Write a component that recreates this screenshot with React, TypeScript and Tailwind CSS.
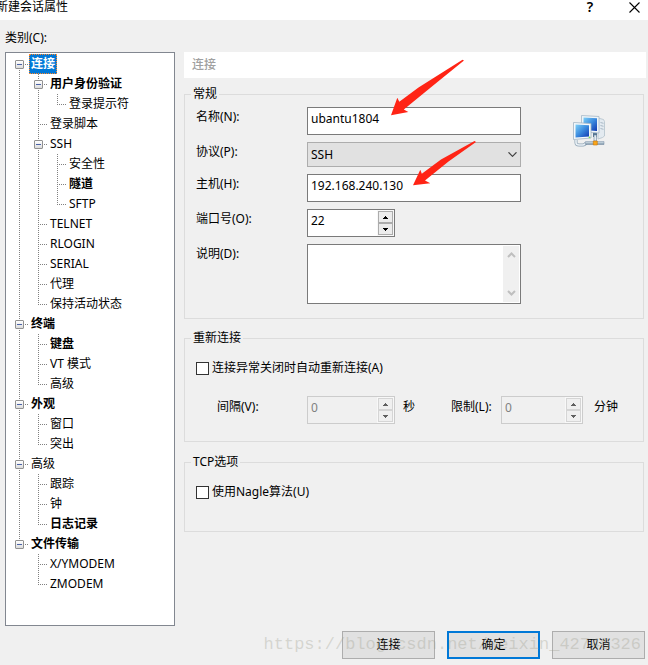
import React, { useState } from 'react';
import type { ReactNode } from 'react';

interface TreeNode {
  label: string;
  bold?: boolean;
  children?: TreeNode[];
}

const categories: TreeNode[] = [
  {
    label: '连接',
    bold: true,
    children: [
      { label: '用户身份验证', bold: true, children: [{ label: '登录提示符' }] },
      { label: '登录脚本' },
      { label: 'SSH', children: [{ label: '安全性' }, { label: '隧道', bold: true }, { label: 'SFTP' }] },
      { label: 'TELNET' },
      { label: 'RLOGIN' },
      { label: 'SERIAL' },
      { label: '代理' },
      { label: '保持活动状态' },
    ],
  },
  { label: '终端', bold: true, children: [{ label: '键盘', bold: true }, { label: 'VT 模式' }, { label: '高级' }] },
  { label: '外观', bold: true, children: [{ label: '窗口' }, { label: '突出' }] },
  { label: '高级', children: [{ label: '跟踪' }, { label: '钟' }, { label: '日志记录', bold: true }] },
  { label: '文件传输', bold: true, children: [{ label: 'X/YMODEM' }, { label: 'ZMODEM' }] },
];

// One 19px wide column of dotted connector lines
const Guide = ({ up, down, right }: { up?: boolean; down?: boolean; right?: boolean }) => (
  <svg className="h-5 w-[19px] shrink-0" viewBox="0 0 19 20" fill="none" stroke="#808080" strokeDasharray="1 1" aria-hidden="true">
    {up && <path d="M9.5 0V11" />}
    {down && <path d="M9.5 10V20" />}
    {right && <path d="M9 10.5H18" />}
  </svg>
);

interface TreeItemProps {
  node: TreeNode;
  path: string;
  guides: boolean[];
  isFirst: boolean;
  isLast: boolean;
  selected: string;
  onSelect: (path: string) => void;
}

const TreeItem = ({ node, path, guides, isFirst, isLast, selected, onSelect }: TreeItemProps) => {
  const [open, setOpen] = useState(true);
  const isSelected = selected === path;
  const isRoot = guides.length === 0;

  return (
    <li role="treeitem" aria-selected={isSelected}>
      <div className="flex h-5">
        {guides.map((line, i) => (
          <Guide key={i} up={line} down={line} />
        ))}
        <div className="relative flex">
          <Guide up={!(isRoot && isFirst)} down={!isLast} right />
          {node.children && (
            <button
              type="button"
              aria-label={open ? 'Collapse' : 'Expand'}
              onClick={() => setOpen(!open)}
              className="absolute top-1.5 left-[5px] flex size-[9px] items-center justify-center rounded-[1px] border border-[#919191] bg-linear-to-b from-white to-[#dcdcdc]"
            >
              <span className="h-px w-[5px] bg-[#4b63a7]" />
            </button>
          )}
        </div>
        <button
          type="button"
          onClick={() => onSelect(path)}
          className={`border px-px leading-[18px] whitespace-nowrap ${node.bold ? 'font-bold' : ''} ${
            isSelected ? 'border-dotted border-[#ff8728] bg-[#0078d7] text-white' : 'border-transparent'
          }`}
        >
          {node.label}
        </button>
      </div>
      {node.children && open && (
        <TreeList
          nodes={node.children}
          path={path}
          guides={[...guides, !isLast]}
          selected={selected}
          onSelect={onSelect}
        />
      )}
    </li>
  );
};

interface TreeListProps {
  nodes: TreeNode[];
  path: string;
  guides: boolean[];
  selected: string;
  onSelect: (path: string) => void;
}

const TreeList = ({ nodes, path, guides, selected, onSelect }: TreeListProps) => (
  <ul role={path ? 'group' : 'tree'} aria-labelledby={path ? undefined : 'category-label'}>
    {nodes.map((node, i) => (
      <TreeItem
        key={node.label}
        node={node}
        path={`${path}/${node.label}`}
        guides={guides}
        isFirst={i === 0}
        isLast={i === nodes.length - 1}
        selected={selected}
        onSelect={onSelect}
      />
    ))}
  </ul>
);

const Group = ({ title, className, children }: { title: string; className: string; children: ReactNode }) => (
  <fieldset className={`mr-0.5 min-w-0 border border-[#dcdcdc] pl-[11px] ${className}`}>
    <legend className="-ml-[5px] px-0.5 leading-5">{title}</legend>
    {children}
  </fieldset>
);

interface SpinnerProps {
  id: string;
  initial: number;
  disabled?: boolean;
  className: string;
}

const Spinner = ({ id, initial, disabled, className }: SpinnerProps) => {
  const [value, setValue] = useState(String(initial));
  const step = (delta: number) => setValue(String(Math.max(0, Number(value) + delta)));
  const buttonStyle = `flex flex-1 items-center justify-center border ${
    disabled ? 'border-[#d5d5d5] bg-[#f0f0f0] text-[#606060]' : 'border-[#acacac] bg-[#ececec] text-black'
  }`;

  return (
    <div className={`flex h-7 border ${disabled ? 'border-[#cccccc] bg-[#f0f0f0]' : 'border-[#7a7a7a] bg-white'} ${className}`}>
      <input
        id={id}
        value={value}
        disabled={disabled}
        onChange={(e) => setValue(e.target.value)}
        className={`min-w-0 flex-1 self-start px-[3px] leading-[22px] outline-none ${disabled ? 'text-[#808080]' : ''}`}
      />
      <div className="flex w-[17px] flex-col border border-[#f8f8f8]">
        <button type="button" aria-label="Increase" disabled={disabled} onClick={() => step(1)} className={buttonStyle}>
          <svg className="h-[3px] w-[5px]" viewBox="0 0 5 3" fill="currentColor" shapeRendering="crispEdges">
            <path d="M2 0h1v1h1v1h1v1H0V2h1V1h1z" />
          </svg>
        </button>
        <button type="button" aria-label="Decrease" disabled={disabled} onClick={() => step(-1)} className={buttonStyle}>
          <svg className="h-[3px] w-[5px]" viewBox="0 0 5 3" fill="currentColor" shapeRendering="crispEdges">
            <path d="M0 0h5v1H4v1H3v1H2V2H1V1H0z" />
          </svg>
        </button>
      </div>
    </div>
  );
};

const CheckRow = ({ label }: { label: string }) => (
  <label className="flex items-center gap-[3px] leading-5">
    <input type="checkbox" className="size-[13px] appearance-none border border-[#333333] bg-white checked:bg-[#0078d7]" />
    {label}
  </label>
);

const NetworkIcon = () => (
  <svg className="mt-2 ml-[52px] size-8 shrink-0" viewBox="0 0 32 32" aria-hidden="true">
    <defs>
      <linearGradient id="screen" x1="0" y1="0" x2="1" y2="1">
        <stop offset="0" stopColor="#7fd0f7" />
        <stop offset="0.5" stopColor="#3a8ade" />
        <stop offset="1" stopColor="#1038b0" />
      </linearGradient>
      <linearGradient id="pipe" x1="0" y1="0" x2="0" y2="1">
        <stop offset="0" stopColor="#dfe9f0" />
        <stop offset="1" stopColor="#7890a4" />
      </linearGradient>
    </defs>
    {/* tower */}
    <path d="M25 3l5.5 1.5 1 2V21l-2 1.5L25 24z" fill="#e3eaf0" stroke="#b3c1cc" strokeWidth="0.8" />
    <path d="M27.5 7.5l3 .8M27.5 10.5l3 .8M27.5 13.5l3 .8" stroke="#8fa2b3" strokeWidth="0.7" />
    {/* rear monitor */}
    <path d="M20 17h4v5h-4z" fill="#4f7291" />
    <path d="M8.5.5L26 1.5V18l-17.5-1z" fill="#eef4f8" stroke="#a5b7c6" strokeWidth="0.8" />
    <path d="M10.5 2.5l13.5.8V16l-13.5-1z" fill="url(#screen)" />
    {/* cable */}
    <path d="M3 25v2.5q0 2.500 3 2.500h4q3-.5 3-3" fill="none" stroke="#8ea3b4" strokeWidth="3" />
    <path d="M3 25v2.5q0 2.500 3 2.500h4q3-.5 3-3" fill="none" stroke="#e9f0f5" strokeWidth="1.6" />
    <path d="M12.5 26.5h18.500v3H12.500z" fill="url(#pipe)" stroke="#7289a0" strokeWidth="0.5" />
    <path d="M21 20h2.500v6H21z" fill="#e2ebf2" stroke="#6e879d" strokeWidth="0.6" />
    {/* front monitor */}
    <path d="M.5 7.500L18 8.500V23L.5 24.500z" fill="#f4f8fb" stroke="#a0b3c3" strokeWidth="0.8" />
    <path d="M2.500 9.500l13.500.8V21.500L2.500 22.500z" fill="url(#screen)" />
    <circle cx="16.500" cy="22.300" r="0.900" fill="#7ddc4f" />
    <path d="M20.300 26h4v4h-4z" fill="#f9a51a" stroke="#c87608" strokeWidth="0.6" />
  </svg>
);

const App: React.FC = () => {
  const [selected, setSelected] = useState('/连接');
  const [name, setName] = useState('ubantu1804');
  const [host, setHost] = useState('192.168.240.130');
  const [protocol, setProtocol] = useState('SSH');
  const [description, setDescription] = useState('');

  const inputStyle = 'block h-7 w-full border border-[#7a7a7a] bg-white px-[3px] pb-1.5 leading-5 outline-none';
  const buttonStyle = 'h-7 w-[93px] bg-[#e1e1e1] leading-5';

  return (
    <div className="relative flex min-h-screen flex-col overflow-hidden bg-[#f0f0f0] font-['Noto_Sans','Noto_Sans_CJK_SC',sans-serif] text-xs text-black">
      {/* Title bar */}
      <header className="flex h-5 items-start bg-white">
        <h1 className="-ml-1 flex-1 leading-[14px]">新建会话属性</h1>
        <button type="button" aria-label="Help" className="w-[62px] text-sm leading-[14px] font-semibold">?</button>
        <button type="button" aria-label="Close" className="flex w-[27px] justify-center pt-0.5">
          <svg className="size-[11px]" viewBox="0 0 11 11" fill="none" stroke="black" strokeWidth="1.1">
            <path d="M.5.5l10 10M10.500.5l-10 10" />
          </svg>
        </button>
      </header>

      <main className="flex flex-1 flex-col pt-2 pb-1.5 pl-[5px]">
        <div id="category-label" className="mb-1 leading-5">类别(C):</div>

        <div className="flex flex-1 gap-[9px]">
          <nav className="w-[170px] shrink-0 border border-[#828790] bg-white pt-px pb-[31px] pl-1">
            <TreeList nodes={categories} path="" guides={[]} selected={selected} onSelect={setSelected} />
          </nav>

          <section className="min-w-0 flex-1 pr-0.5">
            <h2 className="bg-white px-2 py-[3px] leading-5 font-medium text-[#a0a0a0]">连接</h2>

            <Group title="常规" className="mt-1.5 pt-[3px] pb-[14px]">
              <div className="flex items-start">
                <div className="grid flex-1 grid-cols-[111px_minmax(0,214px)] items-start gap-y-[7px] leading-5">
                  <label htmlFor="name">名称(N):</label>
                  <input id="name" value={name} onChange={(e) => setName(e.target.value)} className={inputStyle} />

                  <label htmlFor="protocol">协议(P):</label>
                  <div className="relative">
                    <select
                      id="protocol"
                      value={protocol}
                      onChange={(e) => setProtocol(e.target.value)}
                      className="block h-[25px] w-full appearance-none border border-[#adadad] bg-[#e1e1e1] px-[3px] leading-5 outline-none"
                    >
                      <option>SSH</option>
                      <option>TELNET</option>
                      <option>RLOGIN</option>
                      <option>SERIAL</option>
                      <option>SFTP</option>
                    </select>
                    <svg className="pointer-events-none absolute top-[10px] right-1 h-[5px] w-[9px]" viewBox="0 0 9 5" fill="none" stroke="#404040" strokeWidth="1.2">
                      <path d="M.5.3l4 4 4-4" />
                    </svg>
                  </div>

                  <label htmlFor="host">主机(H):</label>
                  <input id="host" value={host} onChange={(e) => setHost(e.target.value)} className={inputStyle} />

                  <label htmlFor="port">端口号(O):</label>
                  <Spinner id="port" initial={22} className="w-[88px]" />

                  <label htmlFor="description">说明(D):</label>
                  <div className="flex h-[60px] border border-[#7a7a7a] bg-white p-px">
                    <textarea
                      id="description"
                      value={description}
                      onChange={(e) => setDescription(e.target.value)}
                      className="min-w-0 flex-1 resize-none px-0.5 outline-none"
                    />
                    <div className="flex w-4 flex-col items-center justify-between bg-[#f0f0f0] py-[6px]">
                      <svg className="h-[6px] w-[9px]" viewBox="0 0 9 6" fill="none" stroke="#bfbfbf" strokeWidth="2">
                        <path d="M1 5l3.500-3.500L8 5" />
                      </svg>
                      <svg className="h-[6px] w-[9px]" viewBox="0 0 9 6" fill="none" stroke="#bfbfbf" strokeWidth="2">
                        <path d="M1 1l3.500 3.500L8 1" />
                      </svg>
                    </div>
                  </div>
                </div>
                <div className="mr-[38px]">
                  <NetworkIcon />
                </div>
              </div>
            </Group>

            <Group title="重新连接" className="mt-[9px] pt-[10px] pb-[17px]">
              <CheckRow label="连接异常关闭时自动重新连接(A)" />
              <div className="mt-[18px] flex leading-[22px]">
                <label htmlFor="interval" className="w-[111px] pl-[21px]">间隔(V):</label>
                <Spinner id="interval" initial={0} disabled className="w-[88px]" />
                <span className="w-14 pl-2">秒</span>
                <label htmlFor="limit" className="w-[50px]">限制(L):</label>
                <Spinner id="limit" initial={0} disabled className="w-[82px]" />
                <span className="pl-[11px]">分钟</span>
              </div>
            </Group>

            <Group title="TCP选项" className="mt-[10px] pt-[10px] pb-[29px]">
              <CheckRow label="使用Nagle算法(U)" />
            </Group>
          </section>
        </div>

        <footer className="relative mt-[5px] flex justify-end gap-3 pr-[3px]">
          <button type="button" className={`${buttonStyle} border border-[#adadad]`}>连接</button>
          <button type="button" className={`${buttonStyle} border-2 border-[#0078d7]`}>确定</button>
          <button type="button" className={`${buttonStyle} border border-[#adadad]`}>取消</button>
          <span className="pointer-events-none absolute top-1 right-[7px] font-['Liberation_Mono',monospace] text-[17px] leading-5 text-[#a0a090]/35">
            https://blog.csdn.net/weixin_42740326
          </span>
        </footer>
      </main>

      {/* Red pointer arrows over the name and host fields */}
      <svg className="pointer-events-none absolute top-[59px] left-[390px] h-[128px] w-[87px]" viewBox="390 59 87 128" fill="#ff2415" aria-hidden="true">
        <path d="M391 115.300L397.300 97.700L399.300 101.700L418.500 87.500L462.500 59.700L464 60.600L435 84L403.800 109.500L408.300 112Z" />
        <path d="M413 185.300L420.300 169.700L421.800 173.700L441 159.500L474.500 141L476 142L448.500 161.500L425 180.500L430.300 183.200Z" />
      </svg>
    </div>
  );
};

export default App;
